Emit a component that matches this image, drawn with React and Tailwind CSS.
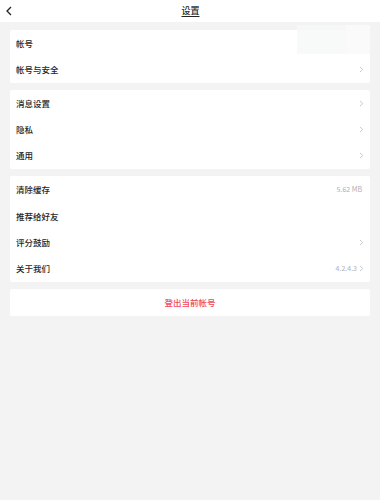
import React from 'react';

const Chevron = () => (
  <svg width="5" height="7" viewBox="0 0 5 7" className="shrink-0">
    <path d="M1 1 L3.8 3.5 L1 6" fill="none" stroke="#c4c4c4" strokeWidth="0.9" />
  </svg>
);

const Row = ({ label, value, arrow }) => (
  <div className="flex items-center h-[26.3px] px-[6px]">
    <span className="flex-1 text-[8.5px] text-[#1e1e1e] font-medium">{label}</span>
    {value && <span className="text-[7px] text-[#b0b0b0] mr-[2px]">{value}</span>}
    {arrow && <Chevron />}
  </div>
);

const Card = ({ children }) => (
  <div className="bg-white rounded-[2px] mx-[10px]">{children}</div>
);

export default function App() {
  return (
    <div
      className="relative w-[380px] h-[500px] bg-[#f3f3f3] overflow-hidden"
      style={{ fontFamily: '"Noto Sans CJK SC", "Liberation Sans", sans-serif' }}
    >
      {/* Header */}
      <div className="relative h-[22px] bg-white flex items-center justify-center">
        <svg width="8" height="10" viewBox="0 0 8 10" className="absolute left-[5px] top-[6px]">
          <path d="M6 1 L2 5 L6 9" fill="none" stroke="#222" strokeWidth="1.3" />
        </svg>
        <span className="text-[9px] text-[#222] underline underline-offset-[2px] font-medium ml-[1px]">设置</span>
      </div>

      <div className="pt-[8px] flex flex-col gap-[7.5px]">
        <Card>
          <Row label="帐号" />
          <Row label="帐号与安全" arrow />
        </Card>
        <Card>
          <Row label="消息设置" arrow />
          <Row label="隐私" arrow />
          <Row label="通用" arrow />
        </Card>
        <Card>
          <Row label="清除缓存" value="5.62 MB" />
          <Row label="推荐给好友" />
          <Row label="评分鼓励" arrow />
          <Row label="关于我们" value="4.2.4.3" arrow />
        </Card>
        <Card>
          <div className="h-[27px] flex items-center justify-center text-[8.5px] font-medium text-[#f0475a]">
            登出当前帐号
          </div>
        </Card>
      </div>

      {/* faint ghost overlay */}
      <div className="absolute left-[297px] top-[25px] w-[73px] h-[29px] bg-[#f6f8f8] opacity-80" />
      <div className="absolute left-[346px] top-[25px] w-[24px] h-[29px] bg-[#fafafa]" />
    </div>
  );
}
